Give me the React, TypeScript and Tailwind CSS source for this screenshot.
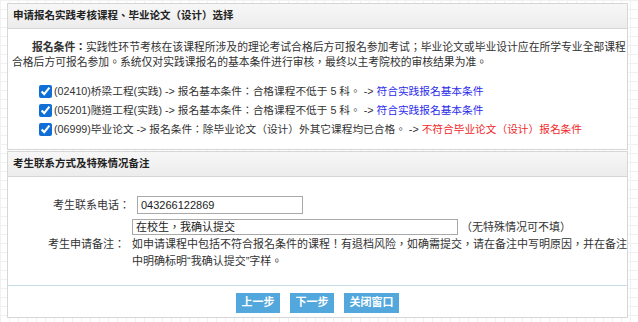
import React from "react";

const COURSES = [
  { code: "(02410)桥梁工程(实践)", cond: "报名基本条件：合格课程不低于 5 科。", result: "符合实践报名基本条件", ok: true },
  { code: "(05201)隧道工程(实践)", cond: "报名基本条件：合格课程不低于 5 科。", result: "符合实践报名基本条件", ok: true },
  { code: "(06999)毕业论文", cond: "报名条件：除毕业论文（设计）外其它课程均已合格。", result: "不符合毕业论文（设计）报名条件", ok: false },
];

function SectionHeader({ title }: { title: string }) {
  return (
    <div className="flex h-[25px] items-center border-b border-[#d6d6d6] bg-gradient-to-b from-[#f7f7f7] to-[#ececec] px-[5px] text-[10.5px] font-bold text-[#222]">
      {title}
    </div>
  );
}

export default function App() {
  return (
    <div className="h-[322px] w-[638px] overflow-hidden bg-white bg-[linear-gradient(#f1f1f1_1px,transparent_1px),linear-gradient(90deg,#f1f1f1_1px,transparent_1px)] bg-[size:9px_9px] pl-[7px] pt-[3px] text-[11px] text-[#333] [font-family:'Liberation_Sans','Noto_Sans_CJK_TC',sans-serif]">
      <div className="w-[621px]">
        {/* 课程选择 */}
        <div className="border border-[#d6d6d6] bg-white">
          <SectionHeader title="申请报名实践考核课程、毕业论文（设计）选择" />
          <div className="pb-[10px] pt-[11px]">
            <p className="whitespace-nowrap pl-[4px] text-[10.8px] leading-[15px]">
              <span className="pl-[20px] font-bold">报名条件：</span>
              实践性环节考核在该课程所涉及的理论考试合格后方可报名参加考试；毕业论文或毕业设计应在所学专业全部课程
              <br />
              合格后方可报名参加。系统仅对实践课报名的基本条件进行审核，最终以主考院校的审核结果为准。
            </p>
            <ul className="mt-[12px] pl-[31px] text-[10.7px]">
              {COURSES.map((c) => (
                <li key={c.code} className="flex h-[19px] items-center whitespace-pre">
                  <input
                    type="checkbox"
                    defaultChecked
                    className="m-0 mr-[2px] h-[13px] w-[13px] accent-[#0f6fd6]"
                  />
                  <span>
                    {c.code} -&gt; {c.cond} -&gt;{" "}
                    <span className={c.ok ? "text-[#2b2bea]" : "text-[#f02a2a]"}>{c.result}</span>
                  </span>
                </li>
              ))}
            </ul>
          </div>
        </div>

        {/* 联系方式 */}
        <div className="mt-[1px] border border-[#d6d6d6] bg-white">
          <SectionHeader title="考生联系方式及特殊情况备注" />
          <div className="pb-[15px] pt-[19px]">
            <div className="flex items-center">
              <div className="w-[122px] text-right">考生联系电话：</div>
              <div className="pl-[7px]">
                <div className="flex h-[18px] w-[166px] items-center border border-[#a9a9a9] px-[3px] text-[#222]">
                  043266122869
                </div>
              </div>
            </div>
            <div className="mt-[5px] flex items-center">
              <div className="w-[122px] text-right">考生申请备注：</div>
              <div className="pl-[7px]">
                <div className="flex items-center">
                  <div className="flex h-[16px] w-[326px] items-center border border-[#a9a9a9] px-[3px] text-[#222]">
                    在校生，我确认提交
                  </div>
                  <span className="pl-[3px]">（无特殊情况可不填）</span>
                </div>
                <p className="whitespace-nowrap leading-[17px]">
                  如申请课程中包括不符合报名条件的课程！有退档风险，如确需提交，请在备注中写明原因，并在备注
                  <br />
                  中明确标明“我确认提交”字样。
                </p>
              </div>
            </div>
          </div>
          <div className="flex justify-center gap-[10px] border-t border-[#c6dbe9] pb-[4px] pt-[7px]">
            <button className="h-[20px] w-[44px] bg-[#52a7dc] text-[11px] font-bold text-white">上一步</button>
            <button className="h-[20px] w-[44px] bg-[#52a7dc] text-[11px] font-bold text-white">下一步</button>
            <button className="h-[20px] w-[55px] bg-[#52a7dc] text-[11px] font-bold text-white">关闭窗口</button>
          </div>
        </div>
      </div>
    </div>
  );
}
